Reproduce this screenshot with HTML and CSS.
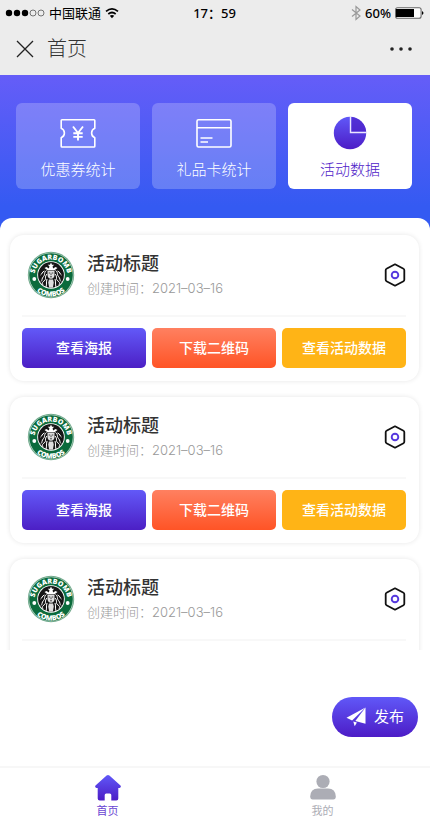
FILE: index.html
```html
<!DOCTYPE html>
<html lang="zh-CN">
<head>
<meta charset="utf-8">
<meta name="viewport" content="width=device-width, initial-scale=1">
<title>首页</title>
<link rel="stylesheet" href="styles.css">
</head>
<body>
<svg class="sprite" width="0" height="0" aria-hidden="true">
  <defs>
    <linearGradient id="violet" x1="0" y1="0" x2="0" y2="1">
      <stop offset="0" stop-color="#6058f8"/>
      <stop offset="1" stop-color="#4c1cc6"/>
    </linearGradient>
    <path id="arc-top" d="M8.600 31 A16.500 16.500 0 1 1 39.400 31"/>
    <path id="arc-bottom" d="M2.500 24 A21.500 21.500 0 0 0 45.500 24"/>
    <symbol id="logo" viewBox="0 0 48 48">
      <circle cx="24" cy="24" r="23.2" fill="#6fa98b"/>
      <circle cx="24" cy="24" r="22.3" fill="#c5ddd0"/>
      <circle cx="24" cy="24" r="21.8" fill="#0b6b3c"/>
      <circle cx="24" cy="24" r="13.8" fill="#fff"/>
      <circle cx="24" cy="24" r="12.9" fill="#161616"/>
      <g fill="none" stroke="#fff" stroke-width="1">
        <path d="M19.5 19.5c-3 2-1 4-3 6s-1 4-2.500 5M17.500 20c-3 1-2 3-4 4M20 23c-3 3 0 5-3 7s-.5 3-1.500 4M28.500 19.500c3 2 1 4 3 6s1 4 2.500 5M30.500 20c3 1 2 3 4 4M28 23c3 3 0 5 3 7s.5 3 1.500 4"/>
        <path d="M20 28c-1 3 0 5-1 8M28 28c1 3 0 5 1 8"/>
      </g>
      <path fill="#fff" d="M24 11.500l1 2.200 2.300.1-1.700 1.500.5 2.100 2.400-1.500 2 1.100-3 2.200h-7l-3-2.200 2-1.100 2.400 1.500.5-2.100-1.700-1.500 2.300-.1z"/>
      <path fill="#ddd" d="M20.500 19.800h7v4.200c0 2-1.500 3.800-3.500 3.800s-3.500-1.800-3.500-3.800zM22 28.500h4l.8 3-1 5.200h-3.600l-1-5.200z"/>
      <path d="M21.700 22h1.600M24.700 22h1.600M24 22.500v1.700M23 25.800h2" stroke="#222" stroke-width=".8"/>
      <circle cx="7.300" cy="28" r="1.900" fill="#fff"/>
      <circle cx="40.700" cy="28" r="1.900" fill="#fff"/>
      <text class="logo-text" text-anchor="middle"><textPath href="#arc-top" startOffset="50%">SUGARBOMB</textPath></text>
      <text class="logo-text" text-anchor="middle"><textPath href="#arc-bottom" startOffset="50%">COMBOS</textPath></text>
    </symbol>
    <symbol id="hex" viewBox="0 0 22 24">
      <path d="M11 1.300L19.500 5.800Q20.300 6.200 20.300 7.200V16.800Q20.300 17.800 19.500 18.200L11 22.700L2.500 18.200Q1.700 17.800 1.700 16.800V7.200Q1.700 6.200 2.500 5.800Z" fill="none" stroke="#111" stroke-width="1.800" stroke-linejoin="round"/>
      <circle cx="11" cy="12" r="3.300" fill="none" stroke="#5538de" stroke-width="1.900"/>
    </symbol>
  </defs>
</svg>

<header class="top">
  <div class="status">
    <div class="status-side">
      <svg width="40" height="10" viewBox="0 0 40 10" aria-hidden="true">
        <g fill="#000"><circle cx="4" cy="5" r="3.200"/><circle cx="12" cy="5" r="3.200"/><circle cx="20" cy="5" r="3.200"/></g>
        <g fill="none" stroke="#555" stroke-width=".8"><circle cx="28" cy="5" r="3"/><circle cx="36" cy="5" r="3"/></g>
      </svg>
      <span class="carrier">中国联通</span>
      <svg width="14" height="12" viewBox="0 0 14 12" aria-hidden="true">
        <path d="M1 4.300Q7-.6 13 4.300M3.300 7Q7 4 10.700 7" fill="none" stroke="#000" stroke-width="1.700"/>
        <path d="M4.800 8.800Q7 7.200 9.200 8.800L7 11.300z"/>
      </svg>
    </div>
    <time class="clock">17：59</time>
    <div class="status-side status-right">
      <svg width="10" height="16" viewBox="0 0 10 16" aria-hidden="true">
        <path d="M1 4.500L9 11 5 14.500V1.500L9 5 1 11.500" fill="none" stroke="#999" stroke-width="1.200"/>
      </svg>
      <span class="percent">60%</span>
      <svg width="29" height="12" viewBox="0 0 29 12" aria-hidden="true">
        <rect x=".6" y=".8" width="25.500" height="10.400" rx="2" fill="#fff" stroke="#666" stroke-width="1.100"/>
        <path d="M1 2h18v8H1z"/><path d="M27 4Q30 6 27 8z"/>
      </svg>
    </div>
  </div>
  <div class="titlebar">
    <button class="plain" type="button" aria-label="关闭">
      <svg width="18" height="18" viewBox="0 0 18 18"><path d="M1 1L17 17M17 1L1 17" stroke="#222" stroke-width="1.300"/></svg>
    </button>
    <h1>首页</h1>
    <button class="plain more" type="button" aria-label="更多">
      <svg width="24" height="6" viewBox="0 0 24 6" fill="#222"><circle cx="3" cy="3" r="1.800"/><circle cx="12" cy="3" r="1.800"/><circle cx="21" cy="3" r="1.800"/></svg>
    </button>
  </div>
</header>

<nav class="hero" aria-label="统计">
  <button class="tab" type="button">
    <svg width="36" height="36" viewBox="0 0 36 36" fill="none" stroke="#fff" stroke-width="1.600" stroke-linejoin="round">
      <path d="M2 4.800h32q.8 0 .8.800v7.600a5.200 5.200 0 0 0 0 9.600v8.400q0 .8-.8.800H2q-.8 0-.8-.8v-8.400a5.200 5.200 0 0 0 0-9.600V5.600q0-.8.800-.8z"/>
      <path d="M13 11.500l5 6.500 5-6.500M18 18v7.500M13.300 18.200h9.400M13.300 21.900h9.400" stroke-width="1.900"/>
    </svg>
    <span>优惠券统计</span>
  </button>
  <button class="tab" type="button">
    <svg width="36" height="36" viewBox="0 0 36 36" fill="none" stroke="#fff" stroke-width="1.600">
      <rect x="1" y="4.800" width="34" height="27.200" rx="1.500"/>
      <path d="M1 12.800h34M4.500 23h12M4.500 27h7.500"/>
    </svg>
    <span>礼品卡统计</span>
  </button>
  <button class="tab active" type="button" aria-pressed="true">
    <svg width="36" height="36" viewBox="0 0 36 36">
      <circle cx="18" cy="18" r="16.200" fill="url(#violet)"/>
      <path d="M19.500 1.900A16.200 16.200 0 0 1 34.100 16.500H19.500z" fill="#4b1dc5" opacity=".65"/>
      <path d="M18.500 1v16.500H35" fill="none" stroke="#ece6ff" stroke-width="1.400"/>
    </svg>
    <span>活动数据</span>
  </button>
</nav>

<main class="list">
  <article class="card">
    <div class="info">
      <svg class="avatar" role="img" aria-label="logo"><use href="#logo"/></svg>
      <div class="text"><h2>活动标题</h2><p>创建时间：2021–03–16</p></div>
      <button class="plain" type="button" aria-label="设置"><svg width="22" height="24"><use href="#hex"/></svg></button>
    </div>
    <div class="actions">
      <button class="btn poster" type="button">查看海报</button>
      <button class="btn code" type="button">下载二维码</button>
      <button class="btn data" type="button">查看活动数据</button>
    </div>
  </article>
  <article class="card">
    <div class="info">
      <svg class="avatar" role="img" aria-label="logo"><use href="#logo"/></svg>
      <div class="text"><h2>活动标题</h2><p>创建时间：2021–03–16</p></div>
      <button class="plain" type="button" aria-label="设置"><svg width="22" height="24"><use href="#hex"/></svg></button>
    </div>
    <div class="actions">
      <button class="btn poster" type="button">查看海报</button>
      <button class="btn code" type="button">下载二维码</button>
      <button class="btn data" type="button">查看活动数据</button>
    </div>
  </article>
  <article class="card">
    <div class="info">
      <svg class="avatar" role="img" aria-label="logo"><use href="#logo"/></svg>
      <div class="text"><h2>活动标题</h2><p>创建时间：2021–03–16</p></div>
      <button class="plain" type="button" aria-label="设置"><svg width="22" height="24"><use href="#hex"/></svg></button>
    </div>
  </article>
</main>

<div class="publish-row">
  <button class="publish" type="button">
    <svg width="20" height="20" viewBox="0 0 20 20" fill="#fff">
      <path d="M19.500.5L.5 10.800l5.600 2.700z"/>
      <path d="M19.500.5v16.300L9.300 13.900z"/>
      <path d="M7.300 14.500l3.600 1-2.200 3.800z"/>
    </svg>
    <span>发布</span>
  </button>
</div>

<nav class="tabbar" aria-label="主导航">
  <a class="current" href="#home">
    <svg width="28" height="28" viewBox="0 0 28 28"><path d="M12.600 1.500Q14 .4 15.400 1.500L26.500 11.600Q27.600 13.500 25.500 14H24.300V24.500Q24.300 26.500 22.300 26.500H17.300V21Q17.300 19.500 15.800 19.500H12.200Q10.700 19.500 10.700 21V26.500H5.700Q3.700 26.500 3.700 24.500V14H2.500Q.4 13.500 1.500 11.600Z" fill="url(#violet)"/></svg>
    <span>首页</span>
  </a>
  <a href="#mine">
    <svg width="28" height="28" viewBox="0 0 28 28" fill="#acadb5"><circle cx="14" cy="7.500" r="6.600"/><path d="M9 14.500h10q7.500 0 7.800 8 0 3-2.500 3H3.700q-2.500 0-2.500-3Q1.500 14.500 9 14.500z"/></svg>
    <span>我的</span>
  </a>
</nav>
</body>
</html>
```
FILE: styles.css
```css
* { box-sizing: border-box; }

body {
  margin: 0;
  height: 100vh;
  display: flex;
  flex-direction: column;
  background: #fff;
  color: #333;
  font-family: Inter, "Noto Sans CJK SC", sans-serif;
}

h1, h2, p { margin: 0; font-weight: 400; }
svg { display: block; flex: none; }
button { font-family: inherit; border: 0; padding: 0; cursor: pointer; }
a { text-decoration: none; }
.plain { background: none; }
.sprite { position: absolute; }

.top { background: #ececec; height: 75px; flex: none; }

.status {
  display: grid;
  grid-template-columns: 1fr auto 1fr;
  align-items: center;
  height: 26px;
  padding: 0 6px 0 5px;
  color: #000;
  font-family: "Noto Sans", "Noto Sans CJK SC", sans-serif;
  font-size: 13px;
  line-height: 18px;
}
.status-side { display: flex; align-items: center; gap: 4px; }
.status-right { justify-content: flex-end; }
.clock, .percent { font-weight: 500; }

.titlebar {
  display: flex;
  align-items: center;
  gap: 13px;
  height: 46px;
  padding: 0 17px 0 16px;
}
.titlebar h1 { font-size: 20px; line-height: 28px; font-weight: 300; }
.more { margin-left: auto; }

.hero {
  display: grid;
  grid-template-columns: repeat(3, 1fr);
  gap: 12px;
  flex: none;
  padding: 28px 18px 41px 16px;
  background: linear-gradient(#655df8, #345af2 85%);
}
.tab {
  display: flex;
  flex-direction: column;
  align-items: center;
  gap: 8px;
  height: 86px;
  padding-top: 12px;
  border-radius: 6px;
  background: rgba(255, 255, 255, 0.22);
  color: #fff;
  font-size: 15px;
  font-weight: 300;
  line-height: 22px;
}
.tab.active { background: #fff; color: #4f22c8; }

.list {
  flex: 1;
  min-height: 0;
  overflow: hidden;
  display: flex;
  flex-direction: column;
  gap: 16px;
  margin-top: -12px;
  padding: 17px 11px 0 10px;
  border-radius: 12px 12px 0 0;
  background: #fff;
}
.card {
  flex: none;
  padding: 0 13px 0 12px;
  height: 146px;
  border-radius: 14px;
  background: #fff;
  box-shadow: 0 0 5px rgba(0, 0, 0, 0.1);
}
.info {
  display: flex;
  align-items: center;
  gap: 12px;
  height: 82px;
  padding: 0 0 1px 5px;
  border-bottom: 2px solid #f8f8f8;
}
.avatar { width: 48px; height: 48px; }
.logo-text {
  fill: #fff;
  font-family: "Open Sans", sans-serif;
  font-size: 7px;
  font-weight: 800;
}
.text { flex: 1; }
.text h2 { font-size: 18px; line-height: 26px; font-weight: 500; }
.text p { font-size: 13px; line-height: 22px; color: #999; font-weight: 300; }

.actions {
  display: grid;
  grid-template-columns: repeat(3, 1fr);
  gap: 6px;
  padding-top: 11px;
}
.btn {
  height: 40px;
  padding-bottom: 2px;
  border-radius: 5px;
  color: #fff;
  font-size: 14px;
  font-weight: 500;
}
.poster { background: linear-gradient(#6259f8, #4c1fc5); }
.code { background: linear-gradient(#ff8060, #ff5426); }
.data { background: #ffb416; }

.publish-row {
  display: flex;
  justify-content: flex-end;
  flex: none;
  padding: 47px 12px 29px;
}
.publish {
  display: flex;
  align-items: center;
  justify-content: center;
  gap: 8px;
  width: 86px;
  height: 40px;
  border-radius: 20px;
  background: linear-gradient(#6058f8, #4c1cc6);
  color: #fff;
  font-size: 15px;
  line-height: 20px;
}

.tabbar {
  display: grid;
  grid-template-columns: 1fr 1fr;
  flex: none;
  height: 61px;
  border-top: 2px solid #f7f7f7;
}
.tabbar a {
  display: flex;
  flex-direction: column;
  align-items: center;
  padding-top: 6px;
  color: #acadb5;
  font-size: 11px;
  line-height: 18px;
}
.tabbar .current { color: #6a45d2; }
```
